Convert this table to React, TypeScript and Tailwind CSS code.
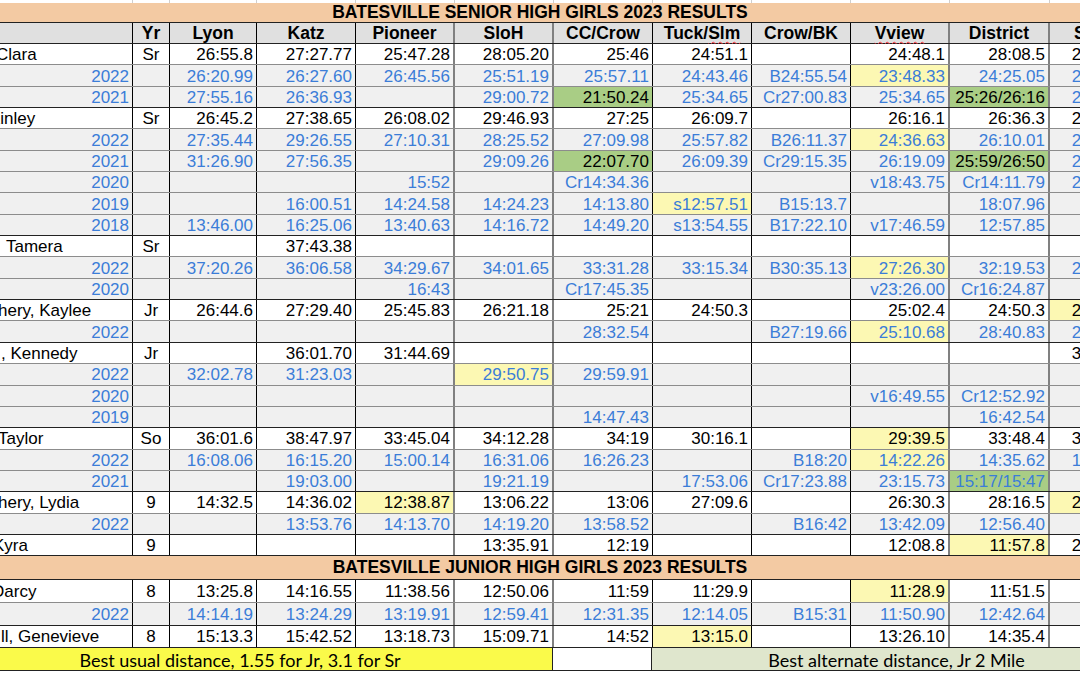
type Row = {
  kind: 'a' | 'y';
  name: string;
  nameCls?: string;
  yr?: string;
  vals: string[];
};

// column widths: name, yr, Lyon, Katz, Pioneer, SloH, CC/Crow, Tuck/Slm, Crow/BK, Vview, District, S
const COLS = [
  'w-[133px] border-r border-black',
  'w-[37px] border-r border-black',
  'w-[87px] border-r border-black',
  'w-[99px] border-r border-black',
  'w-[99px] border-r-2 border-[#808080]',
  'w-[99px] border-r-2 border-[#808080]',
  'w-[99px] border-r border-black',
  'w-[99px] border-r border-black',
  'w-[99px] border-r border-black',
  'w-[99px] border-r-2 border-[#808080]',
  'w-[100px] border-r-2 border-[#808080]',
  'w-[92px] border-r border-black',
];

const TOP = [
  'w-[133px]', 'w-[37px]', 'w-[87px]', 'w-[99px]', 'w-[99px]', 'w-[99px]',
  'w-[99px]', 'w-[99px]', 'w-[99px]', 'w-[99px]', 'w-[100px]', 'w-[92px]',
];

const senior: Row[] = [
  { kind: 'a', name: 'Clara', nameCls: '-ml-[4px]', yr: 'Sr', vals: ['26:55.8', '27:27.77', '25:47.28', '28:05.20', '25:46', '24:51.1', '', '24:48.1', '28:08.5', '25:40.12'] },
  { kind: 'y', name: '2022', vals: ['26:20.99', '26:27.60', '26:45.56', '25:51.19', '25:57.11', '24:43.46', 'B24:55.54', 'Y|23:48.33', '24:25.05', '24:10.33'] },
  { kind: 'y', name: '2021', vals: ['27:55.16', '26:36.93', '', '29:00.72', 'G|21:50.24', '25:34.65', 'Cr27:00.83', '25:34.65', 'G|25:26/26:16', '26:02.17'] },
  { kind: 'a', name: 'Kinley', nameCls: '-ml-[11px]', yr: 'Sr', vals: ['26:45.2', '27:38.65', '26:08.02', '29:46.93', '27:25', '26:09.7', '', '26:16.1', '26:36.3', '25:58.40'] },
  { kind: 'y', name: '2022', vals: ['27:35.44', '29:26.55', '27:10.31', '28:25.52', '27:09.98', '25:57.82', 'B26:11.37', 'Y|24:36.63', '26:10.01', '25:20.41'] },
  { kind: 'y', name: '2021', vals: ['31:26.90', '27:56.35', '', '29:09.26', 'G|22:07.70', '26:09.39', 'Cr29:15.35', '26:19.09', 'G|25:59/26:50', '26:44.02'] },
  { kind: 'y', name: '2020', vals: ['', '', '15:52', '', 'Cr14:34.36', '', '', 'v18:43.75', 'Cr14:11.79', '25:12.60'] },
  { kind: 'y', name: '2019', vals: ['', '16:00.51', '14:24.58', '14:24.23', '14:13.80', 'Y|s12:57.51', 'B15:13.7', '', '18:07.96', ''] },
  { kind: 'y', name: '2018', vals: ['13:46.00', '16:25.06', '13:40.63', '14:16.72', '14:49.20', 's13:54.55', 'B17:22.10', 'v17:46.59', '12:57.85', ''] },
  { kind: 'a', name: 'Tamera', nameCls: 'ml-[6px]', yr: 'Sr', vals: ['', '37:43.38', '', '', '', '', '', '', '', ''] },
  { kind: 'y', name: '2022', vals: ['37:20.26', '36:06.58', '34:29.67', '34:01.65', '33:31.28', '33:15.34', 'B30:35.13', 'Y|27:26.30', '32:19.53', '29:48.20'] },
  { kind: 'y', name: '2020', vals: ['', '', '16:43', '', 'Cr17:45.35', '', '', 'v23:26.00', 'Cr16:24.87', ''] },
  { kind: 'a', name: 'hery, Kaylee', nameCls: '-ml-[2px]', yr: 'Jr', vals: ['26:44.6', '27:29.40', '25:45.83', '26:21.18', '25:21', '24:50.3', '', '25:02.4', '24:50.3', 'Y|24:31.10'] },
  { kind: 'y', name: '2022', vals: ['', '', '', '', '28:32.54', '', 'B27:19.66', 'Y|25:10.68', '28:40.83', '26:55.01'] },
  { kind: 'a', name: ', Kennedy', nameCls: 'ml-[1px]', yr: 'Jr', vals: ['', '36:01.70', '31:44.69', '', '', '', '', '', '', '33:12.40'] },
  { kind: 'y', name: '2022', vals: ['32:02.78', '31:23.03', '', 'Y|29:50.75', '29:59.91', '', '', '', '', ''] },
  { kind: 'y', name: '2020', vals: ['', '', '', '', '', '', '', 'v16:49.55', 'Cr12:52.92', ''] },
  { kind: 'y', name: '2019', vals: ['', '', '', '', '14:47.43', '', '', '', '16:42.54', ''] },
  { kind: 'a', name: 'Taylor', nameCls: '-ml-[2px]', yr: 'So', vals: ['36:01.6', '38:47.97', '33:45.04', '34:12.28', '34:19', '30:16.1', '', 'Y|29:39.5', '33:48.4', '32:40.15'] },
  { kind: 'y', name: '2022', vals: ['16:08.06', '16:15.20', '15:00.14', '16:31.06', '16:26.23', '', 'B18:20', 'Y|14:22.26', '14:35.62', '14:50.20'] },
  { kind: 'y', name: '2021', vals: ['', '19:03.00', '', '19:21.19', '', '17:53.06', 'Cr17:23.88', '23:15.73', 'g|15:17/15:47', ''] },
  { kind: 'a', name: 'hery, Lydia', nameCls: '-ml-[2px]', yr: '9', vals: ['14:32.5', '14:36.02', 'Y|12:38.87', '13:06.22', '13:06', '27:09.6', '', '26:30.3', '28:16.5', 'Y|25:44.30'] },
  { kind: 'y', name: '2022', vals: ['', '13:53.76', '14:13.70', '14:19.20', '13:58.52', '', 'B16:42', '13:42.09', '12:56.40', ''] },
  { kind: 'a', name: 'Kyra', nameCls: '-ml-[7px]', yr: '9', vals: ['', '', '', '13:35.91', '12:19', '', '', '12:08.8', 'Y|11:57.8', '25:19.06'] },
];

const junior: Row[] = [
  { kind: 'a', name: 'Darcy', nameCls: '-ml-[8px]', yr: '8', vals: ['13:25.8', '14:16.55', '11:38.56', '12:50.06', '11:59', '11:29.9', '', 'Y|11:28.9', '11:51.5', ''] },
  { kind: 'y', name: '2022', vals: ['14:14.19', '13:24.29', '13:19.91', '12:59.41', '12:31.35', '12:14.05', 'B15:31', '11:50.90', '12:42.64', ''] },
  { kind: 'a', name: 'll, Genevieve', nameCls: 'ml-[1px]', yr: '8', vals: ['15:13.3', '15:42.52', '13:18.73', '15:09.71', '14:52', 'Y|13:15.0', '', '13:26.10', '14:35.4', ''] },
];

const HEADS = ['', 'Yr', 'Lyon', 'Katz', 'Pioneer', 'SloH', 'CC/Crow', 'Tuck/Slm', 'Crow/BK', 'Vview', 'District', 'State'];

function ValueCell({ raw, col, kind }: { raw: string; col: string; kind: 'a' | 'y' }) {
  let v = raw;
  let bg = kind === 'a' ? 'bg-white' : 'bg-[#f0f0f0]';
  let color = kind === 'a' ? 'text-black' : 'text-[#3b7dd8]';
  if (raw.startsWith('Y|')) {
    v = raw.slice(2);
    bg = 'bg-[#fcf8b3]';
  } else if (raw.startsWith('G|')) {
    v = raw.slice(2);
    bg = 'bg-[#a9cd85]';
    color = 'text-black';
  } else if (raw.startsWith('g|')) {
    v = raw.slice(2);
    bg = 'bg-[#a9cd85]';
  }
  return (
    <div className={`${col} ${bg} ${color} h-full shrink-0 flex items-center justify-end pr-[3px] pt-[1px] whitespace-nowrap`}>
      {v}
    </div>
  );
}

function DataRow({ row, next, tall }: { row: Row; next?: Row; tall?: boolean }) {
  const line = !next || next.kind === 'a' ? 'border-[#222]' : 'border-[#8c8c8c]';
  const bg = row.kind === 'a' ? 'bg-white' : 'bg-[#f0f0f0]';
  return (
    <div className={`flex ${tall ? 'h-[22.7px]' : 'h-[21.35px]'} border-b ${line}`}>
      <div className={`${COLS[0]} ${bg} h-full shrink-0 flex items-center pt-[1px] overflow-hidden whitespace-nowrap`}>
        {row.kind === 'a' ? (
          <span className={row.nameCls}>{row.name}</span>
        ) : (
          <span className="ml-auto pr-[3px] text-[#3b7dd8]">{row.name}</span>
        )}
      </div>
      <div className={`${COLS[1]} ${bg} h-full shrink-0 flex items-center justify-center pt-[1px]`}>{row.yr}</div>
      {row.vals.map((v, i) => (
        <ValueCell key={i} raw={v} col={COLS[i + 2]} kind={row.kind} />
      ))}
    </div>
  );
}

function Band({ title, tall }: { title: string; tall?: boolean }) {
  return (
    <div className={`${tall ? 'h-[24px]' : 'h-[20px]'} bg-[#f3caa3] border-b border-[#222] flex items-center`}>
      <div className="w-[1080px] text-center font-bold text-[17.5px]">{title}</div>
    </div>
  );
}

export default function App() {
  return (
    <div className="w-[1080px] h-[675px] overflow-hidden bg-white text-black text-[17px] leading-none font-['Liberation_Sans',Arial,sans-serif]">
      <div className="w-[1141px]">
        {/* tail of the row above */}
        <div className="flex h-[3px] bg-white">
          {TOP.map((c, i) => (
            <div key={i} className={`${c} h-full shrink-0 border-r border-[#cfcfcf]`} />
          ))}
        </div>

        <Band title="BATESVILLE SENIOR HIGH GIRLS 2023 RESULTS" />

        <div className="flex h-[21px] border-b border-[#222] bg-[#e0e0e0] font-bold text-[17.5px]">
          {HEADS.map((h, i) => (
            <div key={i} className={`${COLS[i]} h-full shrink-0 flex items-center justify-center pt-[1px] whitespace-nowrap`}>
              {h === 'Tuck/Slm' ? (
                <span>
                  Tuck/<span className="underline decoration-wavy decoration-red-500 decoration-1 underline-offset-2">Slm</span>
                </span>
              ) : h === 'Vview' ? (
                <span className="underline decoration-wavy decoration-red-500 decoration-1 underline-offset-2">Vview</span>
              ) : (
                h
              )}
            </div>
          ))}
        </div>

        {senior.map((r, i) => (
          <DataRow key={i} row={r} next={senior[i + 1]} />
        ))}

        <Band title="BATESVILLE JUNIOR HIGH GIRLS 2023 RESULTS" tall />

        {junior.map((r, i) => (
          <DataRow key={i} row={r} next={junior[i + 1]} tall />
        ))}

        <div className="flex h-[23px] border-b border-[#222] font-['Lato',sans-serif] text-[18px]">
          <div className="w-[553px] shrink-0 h-full bg-[#fafa4a] border-r border-[#222] flex items-center justify-center pr-[72px] pt-[1px]">
            Best usual distance, 1.55 for Jr, 3.1 for Sr
          </div>
          <div className="w-[99px] shrink-0 h-full bg-white border-r border-[#222]" />
          <div className="w-[489px] shrink-0 h-full bg-[#dfe6cd] flex items-center justify-center pt-[1px]">
            Best alternate distance, Jr 2 Mile
          </div>
        </div>
      </div>
    </div>
  );
}
